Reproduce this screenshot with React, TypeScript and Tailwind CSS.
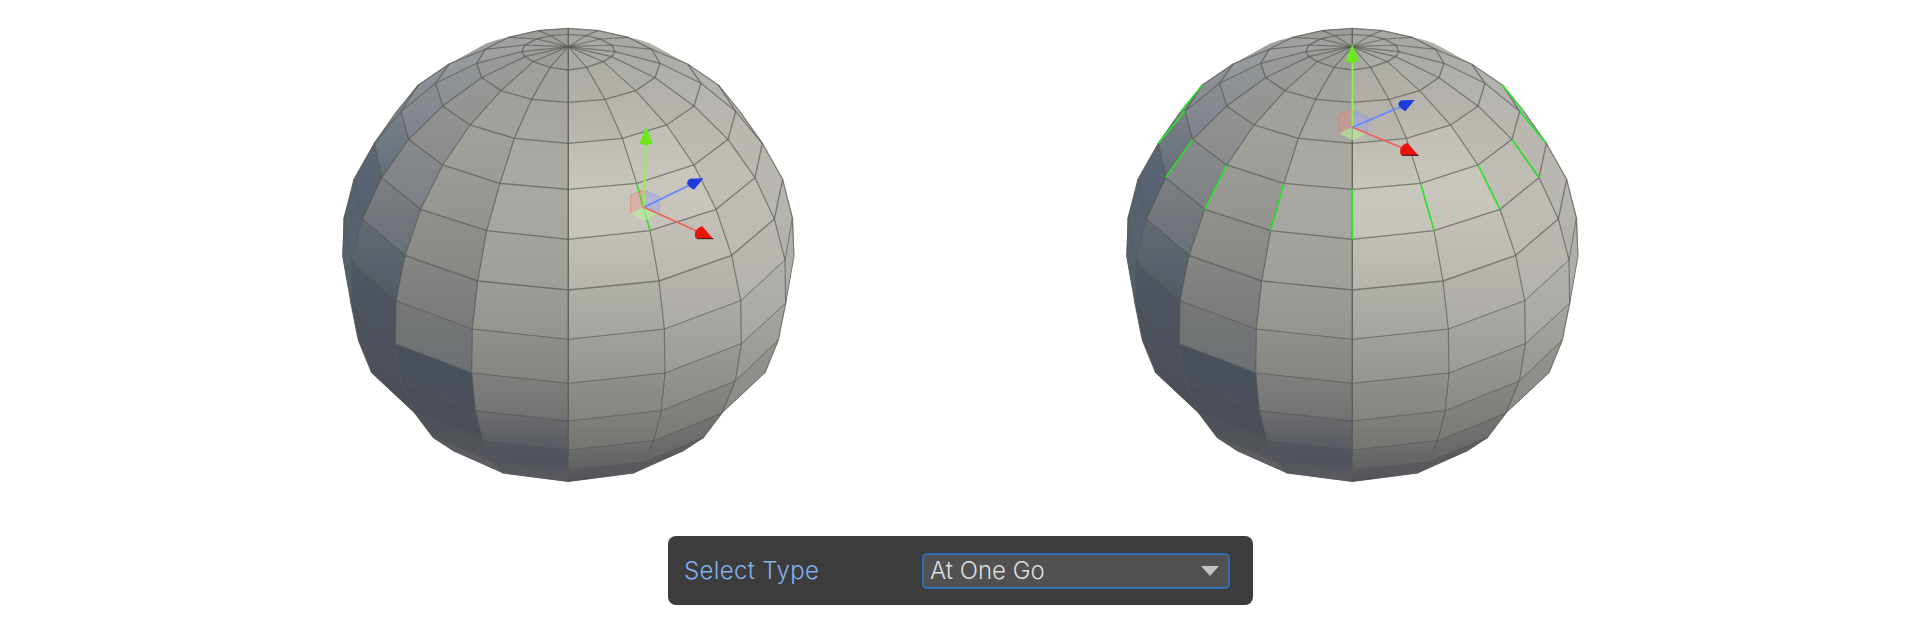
import React from "react";

// half mesh, measured on the sphere: every ring is a list of [dx, y] per meridian, mirrored around x = 745
const rings: number[][][] = [
  [[0,110],[0,110],[0,110],[0,110],[0,110],[0,110],[0,110],[0,110],[0,110]],
  [[0,180],[55,172],[105,155],[130,140],[140,125],[130,105],[95,87],[52,77],[0,73]],
  [[0,277],[110,268],[202,242],[260,203],[275,160],[250,118],[180,82],[90,62],[0,55]],
  [[0,400],[162,385],[295,345],[377,288],[398,220],[358,162]],
  [[0,538],[205,520],[377,465],[479,388],[502,304],[450,225]],
  [[0,688],[245,662],[443,598],[560,503],[582,400],[515,305]],
  [[0,840],[272,813],[490,736],[618,627],[643,508]],
  [[0,988],[288,957],[517,872],[650,750],[672,625]],
  [[0,1120],[290,1089],[519,1001],[652,880],[677,738]],
  [[0,1233],[279,1202],[501,1113],[630,990]],
  [[0,1320],[256,1292],[460,1210],[590,1088]],
  [[0,1380],[228,1356],[405,1283]],
  [[0,1415],[195,1390],[340,1325]],
];

const outline = [[0,55],[90,60],[215,90],[245,100],[358,162],[450,225],[515,305],[582,400],[643,508],[675,625],[677,740],[652,880],[630,990],[590,1088],[460,1210],[405,1283],[340,1325],[195,1390],[0,1415]];

// face colours, row by row (between ring i and ring i+1), column by column from the centre meridian out
const rightFaces = [
  ["#a9a9a3","#a9a9a3","#a9a9a4","#a9a9a5","#a8a8a4","#a8a8a4","#a6a6a2","#a6a6a2"],
  ["#afada6","#b0aea7","#aeaca7","#abaaa6","#a9a8a5","#a9a8a6","#abaaa7","#a8a8a3"],
  ["#b4b2ab","#b7b5ad","#b3b1ab","#b3b1ac","#aeada9"],
  ["#c4c2b8","#c6c4bb","#bbb9b1","#b8b6af","#b3b2ad"],
  ["#cdcbc0","#c9c7be","#bfbdb5","#bab8b1","#b6b4ae"],
  ["#bcbab1","#bebcb3","#bebcb4","#b8b6b0"],
  ["#aaa9a3","#b3b1ab","#b8b6af","#b7b5af"],
  ["#9c9b95","#a4a39d","#aeaca7","#aeaca8"],
  ["#8a8a85","#93928d","#a09f99"],
  ["#7c7c78","#7f7f7b","#8b8b86"],
  ["#686969","#6f6f6d"],
  ["#515359","#555658"],
];
const leftFaces = [
  ["#9f9f9a","#9f9f9a","#9e9f9b","#9e9f9c","#a0a2a0","#a2a3a1","#9f9f9c","#9f9f9a"],
  ["#a3a39e","#a0a09b","#9a9b99","#999b9b","#a0a2a0","#9fa19f","#9d9e9b","#9d9d99"],
  ["#a6a59f","#a2a19c","#959693","#8e9295","#95999c"],
  ["#a9a8a2","#a09f9a","#8f9090","#858b90","#8a9095"],
  ["#a9a8a2","#979793","#83868a","#727980","#7a8189"],
  ["#a1a19c","#8c8c89","#757a7f","#4e5c6e"],
  ["#9a9a95","#808180","#566069","#5a6470"],
  ["#8a8a86","#6d7072","#4b515c","#535f6b"],
  ["#7a7b78","#4a515c","#4d535e"],
  ["#62646a","#4a4d56","#4a4e57"],
  ["#4a4d57","#4e5056"],
  ["#595b60","#606166"],
];

const pt = (p: number[], side: number) => `${745 + side * p[0]},${p[1]}`;

const channel = (c: string, i: number) => parseInt(c.slice(1 + i * 2, 3 + i * 2), 16);
const mix = (a: string, b: string | undefined, t: number) => {
  // no soft blend across a hard jump, those faces stay flat on that side
  if (!b || Math.abs(channel(a, 1) - channel(b, 1)) > 30) return a;
  return "rgb(" + [0, 1, 2].map((i) => Math.round(channel(a, i) * (1 - t) + channel(b, i) * t)).join(",") + ")";
};

const Gizmo = ({ x, y, top, blue, red }: { x: number; y: number; top: number[]; blue: number[]; red: number[] }) => (
  <g transform={`translate(${x} ${y})`}>
    <polygon points="-40,-37 0,-52 0,0 -40,18" fill="#f08a80" fillOpacity="0.35" />
    <polygon points="0,-52 46,-32 46,16 0,0" fill="#9a9cf5" fillOpacity="0.4" />
    <polygon points="-40,18 0,0 46,16 3,40" fill="#b8f09a" fillOpacity="0.6" />
    <path d="M-40,18 V-37 L0,-52" fill="none" stroke="#f06a60" strokeWidth="2.5" strokeDasharray="4 3" />
    <path d="M0,-52 L46,-32 V16" fill="none" stroke="#8a8cf5" strokeWidth="2.5" strokeDasharray="4 3" />
    <line x1="0" y1="0" x2={top[0]} y2={top[1] + 50} stroke="#90f050" strokeWidth="6" />
    <path transform={`translate(${top[0]} ${top[1]})`} d="M0,0 L-20,50 Q0,60 20,50 Z" fill="#6ce81e" />
    <line x1="0" y1="0" x2={blue[0] - 45} y2={blue[1] + 22} stroke="#6686ff" strokeWidth="5" />
    <path transform={`translate(${blue[0]} ${blue[1]})`} d="M0,0 L-40,1 Q-62,16 -28,34 Z" fill="#1c3ce0" />
    <line x1="0" y1="0" x2={red[0] - 50} y2={red[1] - 24} stroke="#f0605a" strokeWidth="5" />
    <path transform={`translate(${red[0]} ${red[1]})`} d="M0,0 L-34,-39 Q-62,-28 -54,-3 Z" fill="#e8140c" />
    <line x1={red[0] - 50} y1={red[1] - 1} x2={red[0]} y2={red[1] - 1} stroke="#40100c" strokeWidth="3" />
  </g>
);

const Sphere = ({ id, allGreen, children }: { id: string; allGreen: boolean; children: React.ReactNode }) => {
  const grads: React.ReactNode[] = [];
  const faces: React.ReactNode[] = [];
  const lines: React.ReactNode[] = [];
  [1, -1].forEach((side) => {
    const table = side === 1 ? rightFaces : leftFaces;
    table.forEach((row, i) => {
      row.forEach((fill, j) => {
        const a = rings[i][j], b = rings[i][j + 1], c = rings[i + 1][j + 1], d = rings[i + 1][j];
        if (!a || !b || !c || !d) return;
        const key = `${id}${side}-${i}-${j}`;
        const y1 = Math.min(a[1], b[1]), y2 = Math.max(c[1], d[1]);
        grads.push(
          <linearGradient key={key} id={key} gradientUnits="userSpaceOnUse" x1="0" y1={y1} x2="0" y2={y2}>
            <stop offset="0" stopColor={mix(fill, table[i - 1]?.[j], 0.4)} />
            <stop offset="1" stopColor={mix(fill, table[i + 1]?.[j], 0.4)} />
          </linearGradient>
        );
        faces.push(<polygon key={key} points={[a, b, c, d].map((p) => pt(p, side)).join(" ")} fill={`url(#${key})`} stroke={fill} strokeWidth="1" />);
      });
    });
    // ring lines and meridian lines
    rings.forEach((ring, i) => {
      const w = i < 7 ? 4 : 3;
      if (i > 0 && i < 12) lines.push(<polyline key={`r${side}${i}`} points={ring.map((p) => pt(p, side)).join(" ")} fill="none" stroke="#5a5a56" strokeOpacity="0.68" strokeWidth={w} />);
    });
    for (let m = 0; m < 9; m++) {
      const pts = rings.filter((r) => r[m]).map((r) => r[m]);
      lines.push(<polyline key={`m${side}${m}`} points={pts.map((p) => pt(p, side)).join(" ")} fill="none" stroke="#5a5a56" strokeOpacity="0.68" strokeWidth="3.6" />);
    }
  });
  const green = (m: number, side: number) => (
    <line key={`g${side}${m}`} x1={745 + side * rings[4][m][0]} y1={rings[4][m][1]} x2={745 + side * rings[5][m][0]} y2={rings[5][m][1]} stroke="#22ee22" strokeWidth="4.5" />
  );
  return (
    <svg viewBox="0 0 1470 1440" className="w-[490px] h-[480px] shrink-0">
      <defs>
        <linearGradient id={`${id}-l`} x1="0" y1="0" x2="0" y2="1">
          <stop offset="0" stopColor="#a0a3a2" />
          <stop offset="0.25" stopColor="#8a9096" />
          <stop offset="0.45" stopColor="#6a7480" />
          <stop offset="0.7" stopColor="#5a5e66" />
          <stop offset="1" stopColor="#55575c" />
        </linearGradient>
        <linearGradient id={`${id}-r`} x1="0" y1="0" x2="0" y2="1">
          <stop offset="0" stopColor="#b0afa9" />
          <stop offset="0.6" stopColor="#b6b4ae" />
          <stop offset="1" stopColor="#656662" />
        </linearGradient>
        {grads}
      </defs>
      <polygon points={outline.map((p) => pt(p, -1)).join(" ")} fill={`url(#${id}-l)`} />
      <polygon points={outline.map((p) => pt(p, 1)).join(" ")} fill={`url(#${id}-r)`} />
      {faces}
      {lines}
      {allGreen
        ? [0, 1, 2, 3, 4, 5].flatMap((m) => [green(m, 1), green(m, -1)])
        : green(1, 1)}
      {children}
    </svg>
  );
};

export default function App() {
  return (
    <div className="w-[1920px] h-[640px] bg-white overflow-hidden font-[Inter,sans-serif]">
      <div className="flex pt-[10px] pl-[320px] gap-[294px]">
        <Sphere id="a" allGreen={false}>
          <Gizmo x={972} y={592} top={[6, -242]} blue={[178, -87]} red={[208, 95]} />
        </Sphere>
        <Sphere id="b" allGreen={true}>
          <Gizmo x={745} y={352} top={[0, -249]} blue={[187, -82]} red={[199, 85]} />
        </Sphere>
      </div>
      <div className="mt-[46px] ml-[668px] w-[585px] h-[69px] rounded-lg bg-[#3c3c3c] flex items-center pl-[16px]">
        <span className="w-[238px] shrink-0 text-[24px] font-light tracking-[0.35px] text-[#82b0ee]">Select Type</span>
        <div className="w-[308px] h-[36px] rounded-[5px] border-2 border-[#2f6fb5] bg-[#515151] flex items-center justify-between pl-[6px] pr-[9px]">
          <span className="text-[24px] font-light text-[#dedede]">At One Go</span>
          <svg width="18" height="10" viewBox="0 0 18 10"><polygon points="0,0 18,0 9,10" fill="#c4c4c4" /></svg>
        </div>
      </div>
    </div>
  );
}
